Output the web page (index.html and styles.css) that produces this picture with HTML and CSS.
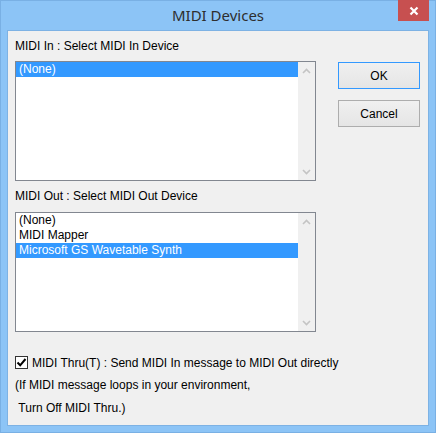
FILE: index.html
```html
<!DOCTYPE html>
<html lang="en">

<head>
    <meta charset="UTF-8">
    <title>MIDI Devices</title>
    <link rel="stylesheet" href="styles.css">
</head>

<body>
    <div class="window">
        <div class="titlebar">
            <span></span>
            <div class="title">MIDI Devices</div>
            <div class="close">
                <svg width="10" height="10" viewBox="0 0 10 10">
                    <path d="M1.5 1.5 L8.5 8.5 M8.5 1.5 L1.5 8.5" stroke="#fff" stroke-width="2.2" />
                </svg>
            </div>
        </div>

        <div class="client">
            <div class="device-area">
                <div class="lists">
                    <!-- MIDI In -->
                    <div class="label first">MIDI In : Select MIDI In Device</div>
                    <div class="listbox">
                        <ul class="items">
                            <li class="selected">(None)</li>
                        </ul>
                        <div class="scrollbar">
                            <div class="arrow">
                                <svg width="9" height="6" viewBox="0 0 9 6"><path d="M1 5 L4.5 1.5 L8 5" fill="none" stroke="#c4c4c4" stroke-width="1.6" /></svg>
                            </div>
                            <div class="arrow">
                                <svg width="9" height="6" viewBox="0 0 9 6"><path d="M1 1 L4.5 4.5 L8 1" fill="none" stroke="#c4c4c4" stroke-width="1.6" /></svg>
                            </div>
                        </div>
                    </div>

                    <!-- MIDI Out -->
                    <div class="label second">MIDI Out : Select MIDI Out Device</div>
                    <div class="listbox">
                        <ul class="items">
                            <li>(None)</li>
                            <li>MIDI Mapper</li>
                            <li class="selected">Microsoft GS Wavetable Synth</li>
                        </ul>
                        <div class="scrollbar">
                            <div class="arrow">
                                <svg width="9" height="6" viewBox="0 0 9 6"><path d="M1 5 L4.5 1.5 L8 5" fill="none" stroke="#c4c4c4" stroke-width="1.6" /></svg>
                            </div>
                            <div class="arrow">
                                <svg width="9" height="6" viewBox="0 0 9 6"><path d="M1 1 L4.5 4.5 L8 1" fill="none" stroke="#c4c4c4" stroke-width="1.6" /></svg>
                            </div>
                        </div>
                    </div>
                </div>

                <div class="buttons">
                    <button class="btn default">OK</button>
                    <button class="btn">Cancel</button>
                </div>
            </div>

            <div class="thru">
                <span class="checkbox">
                    <svg width="11" height="11" viewBox="0 0 11 11"><path d="M1.5 5.5 L4.2 8.3 L9.5 2" fill="none" stroke="#000" stroke-width="2" /></svg>
                </span>
                MIDI Thru(T) : Send MIDI In message to MIDI Out directly
            </div>
            <p class="note">(If MIDI message loops in your environment,</p>
            <p class="note">&nbsp;Turn Off MIDI Thru.)</p>
        </div>
    </div>
</body>

</html>
```

FILE: styles.css
```css
body {
    margin: 0;
    padding: 0;
    background: #8cc4f6;
    font-family: "Liberation Sans", Arial, sans-serif;
    font-size: 12px;
    color: #000;
}

.window {
    width: 436px;
    height: 433px;
    box-sizing: border-box;
    padding: 0 7px;
    box-shadow: inset 0 0 0 1px #79b0e4;
}

.titlebar {
    height: 30px;
    display: grid;
    grid-template-columns: 1fr auto 1fr;
    align-items: start;
}

.title {
    font-family: "Noto Sans", "Open Sans", sans-serif;
    font-size: 15px;
    line-height: 30px;
    color: #2e2e2e;
}

.close {
    justify-self: end;
    width: 31px;
    height: 21px;
    background: #c75050;
    display: grid;
    place-items: center;
}

.client {
    height: 396px;
    box-sizing: border-box;
    border: 1px solid #7db2e4;
    background: #f0f0f0;
    padding: 8px 7px 0 7px;
}

.device-area {
    display: flex;
    gap: 22px;
}

.lists {
    width: 301px;
}

.label {
    height: 15px;
    line-height: 15px;
}

.label.first {
    margin-bottom: 7px;
}

.label.second {
    margin: 8px 0;
}

.listbox {
    height: 120px;
    box-sizing: border-box;
    border: 1px solid #828790;
    background: #fff;
    display: flex;
}

.items {
    flex: 1;
    margin: 0;
    padding: 0;
    list-style: none;
}

.items li {
    height: 15px;
    line-height: 15px;
    padding-left: 3px;
    white-space: nowrap;
}

.items li.selected {
    background: #3399ff;
    color: #fff;
}

.scrollbar {
    width: 17px;
    background: #f0f0f0;
    display: flex;
    flex-direction: column;
    justify-content: space-between;
}

.arrow {
    height: 17px;
    display: grid;
    place-items: center;
}

.buttons {
    display: flex;
    flex-direction: column;
    gap: 11px;
    margin-top: 23px;
}

.btn {
    width: 82px;
    height: 27px;
    padding: 0;
    border: 1px solid #adadad;
    background: linear-gradient(#f0f0f0, #e5e5e5);
    font-family: inherit;
    font-size: 12px;
    color: #000;
}

.btn.default {
    border-color: #3399ff;
}

.thru {
    display: flex;
    align-items: center;
    height: 23px;
    margin-top: 19px;
}

.checkbox {
    width: 13px;
    height: 13px;
    box-sizing: border-box;
    border: 1px solid #333;
    background: #fff;
    margin-right: 4px;
    display: grid;
    place-items: center;
}

.note {
    margin: 0;
    line-height: 23px;
}
```
